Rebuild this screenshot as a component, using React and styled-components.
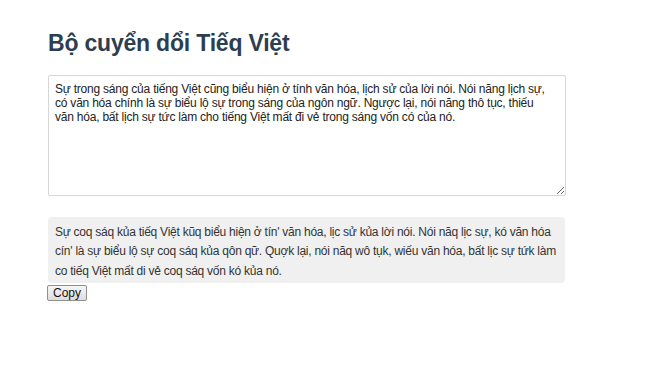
import React, { useState } from "react";
import styled, { createGlobalStyle } from "styled-components";

const Global = createGlobalStyle`
  html, body {
    margin: 0;
    padding: 0;
    background: #fff;
  }
  * {
    box-sizing: border-box;
  }
`;

const source =
  "Sự trong sáng của tiếng Việt cũng biểu hiện ở tính văn hóa, lịch sử của lời nói. Nói năng lịch sự, có văn hóa chính là sự biểu lộ sự trong sáng của ngôn ngữ. Ngược lại, nói năng thô tục, thiếu văn hóa, bất lịch sự tức làm cho tiếng Việt mất đi vẻ trong sáng vốn có của nó.";

const converted =
  "Sự coq sáq kủa tiếq Việt kũq biểu hiện ở tín' văn hóa, lịc sử kủa lời nói. Nói năq lịc sự, kó văn hóa cín' là sự biểu lộ sự coq sáq kủa qôn qữ. Quợk lại, nói năq wô tụk, wiếu văn hóa, bất lịc sự tứk làm co tiếq Việt mất di vẻ coq sáq vốn kó kủa nó.";

const App = () => {
  const [text, setText] = useState(source);
  return (
    <Page>
      <Global />
      <Title>Bộ cuyển dổi Tiếq Việt</Title>
      <Input
        value={text}
        spellCheck={true}
        onChange={(e) => setText(e.target.value)}
      />
      <Output>{converted}</Output>
      <CopyButton>Copy</CopyButton>
    </Page>
  );
};

const Page = styled.div`
  width: 566px;
  padding: 24px 0 0 48px;
  font-family: "Liberation Sans", Arial, sans-serif;
  display: flex;
  flex-direction: column;
  align-items: flex-start;
`;

const Title = styled.h1`
  margin: 3px 0 16px;
  font-size: 23px;
  font-weight: 700;
  line-height: 32px;
  letter-spacing: -0.2px;
  color: #2c3e50;
  font-family: "Liberation Sans", Arial, sans-serif;
`;

const Input = styled.textarea`
  width: 518px;
  height: 121px;
  padding: 6px 11px 4px 6px;
  border: 1px solid #d6d6d6;
  border-radius: 2px;
  font-family: "Liberation Sans", Arial, sans-serif;
  font-size: 12px;
  line-height: 14px;
  letter-spacing: -0.22px;
  color: #222;
  resize: both;
  outline: none;
  margin: 0;
`;

const Output = styled.div`
  margin-top: 21px;
  width: 517px;
  padding: 6px 7px 2px;
  background: #f0f0f0;
  border-radius: 4px;
  font-size: 12px;
  line-height: 19.3px;
  letter-spacing: -0.25px;
  color: #333;
`;

const CopyButton = styled.button`
  margin: 2px 0 0 -1px;
  height: 16px;
  padding: 0 5px;
  font-family: "Liberation Sans", Arial, sans-serif;
  font-size: 12px;
  line-height: 12px;
  color: #111;
  background: linear-gradient(#f6f6f6, #dddddd);
  border: 1px solid #8f8f8f;
  border-radius: 2px;
`;

export default App;
